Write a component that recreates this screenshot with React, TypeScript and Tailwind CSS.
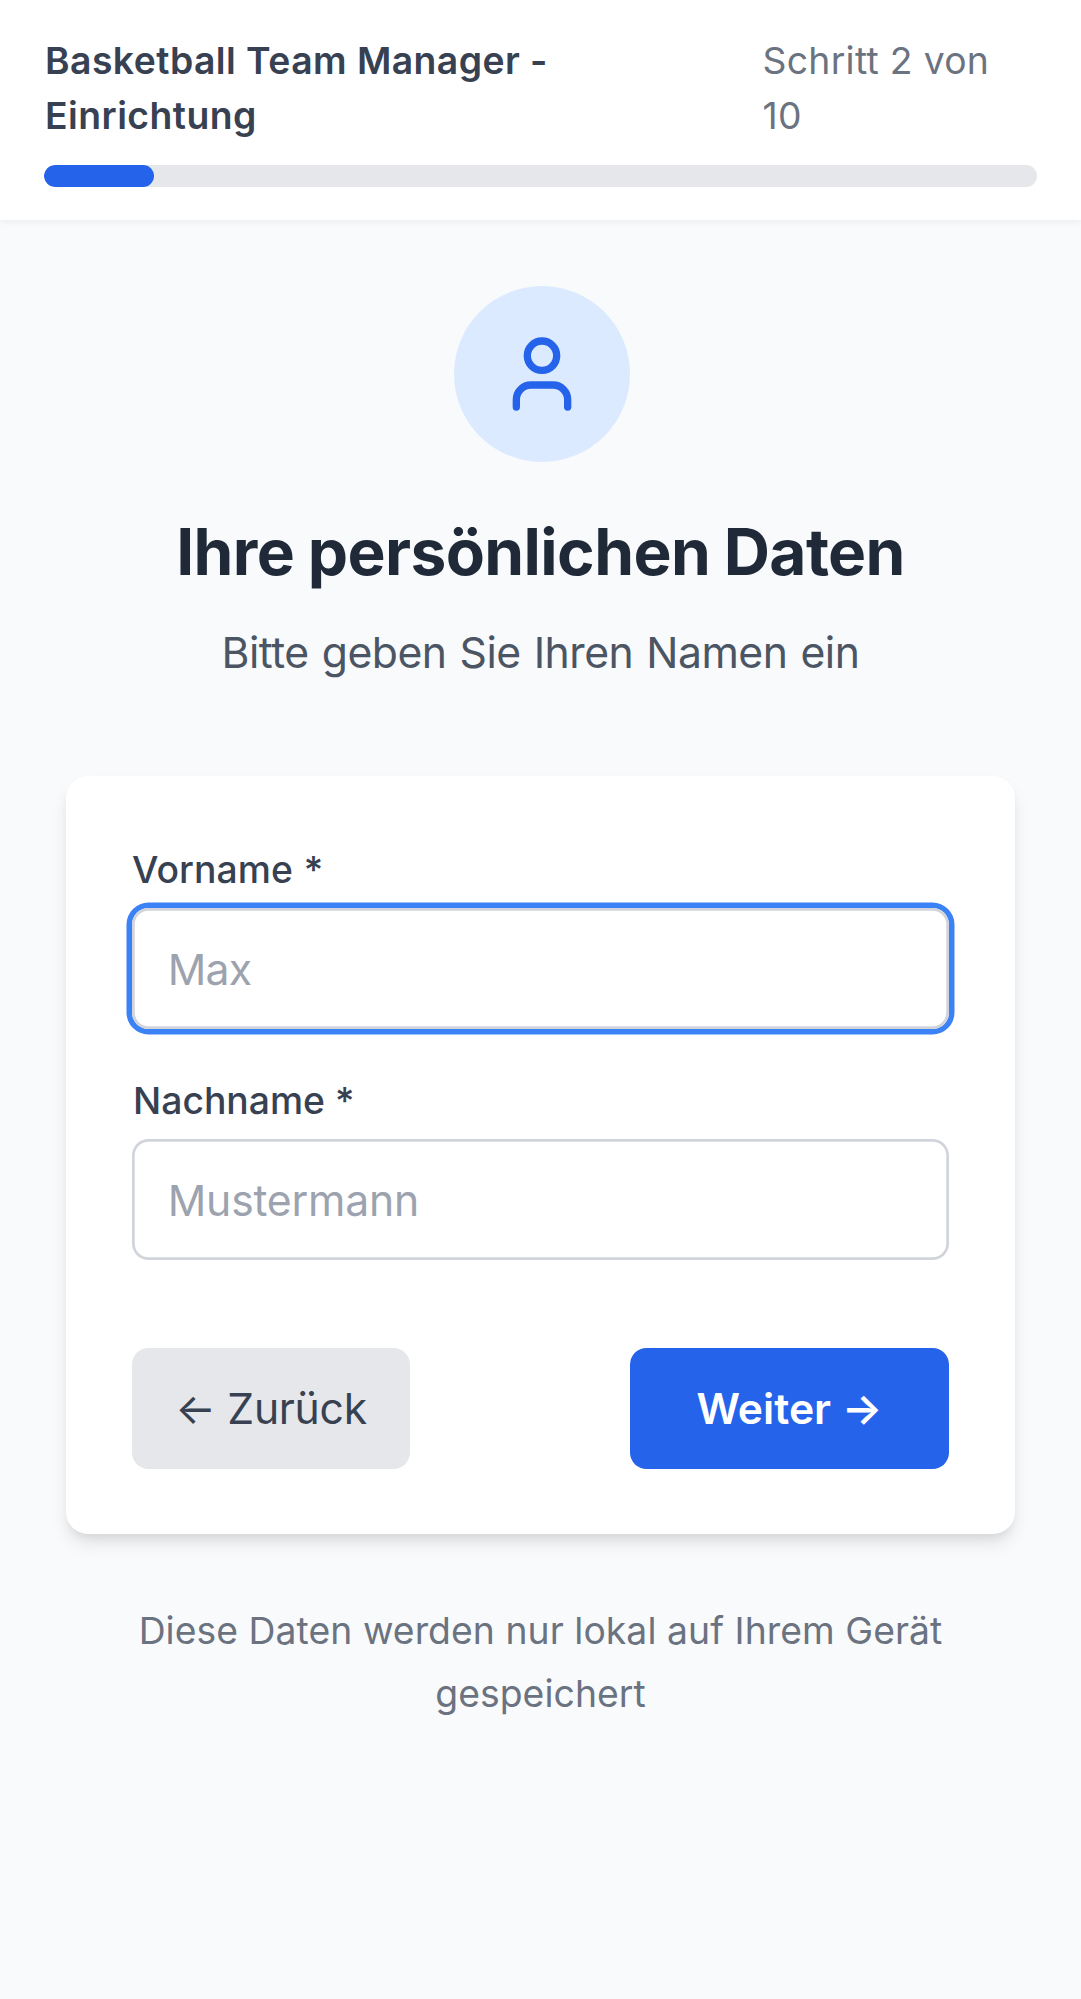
import type { ReactNode } from "react";

const TOTAL_STEPS = 10;
const progress = 1 / 9;

function UserIcon() {
  return (
    <svg viewBox="0 0 24 24" fill="none" stroke="currentColor" strokeWidth="2" strokeLinecap="round" strokeLinejoin="round" className="size-[88px] text-[#2563eb]">
      <path d="M19 21v-2a4 4 0 0 0-4-4H9a4 4 0 0 0-4 4v2" />
      <circle cx="12" cy="7" r="4" />
    </svg>
  );
}

function Header() {
  return (
    <header className="h-[220px] bg-white px-11 pt-[33px] shadow-[0_2.75px_5.5px_rgb(0_0_0/0.05)]">
      <div className="mb-[22px] flex justify-between pl-px text-[37.3px] leading-[55px]">
        <span className="w-[530px] font-semibold tracking-[0.45px] text-[#374151]">
          Basketball Team Manager - Einrichtung
        </span>
        <span className="w-[274.5px] tracking-[0.3px] text-[#6b7280]">Schritt 2 von {TOTAL_STEPS}</span>
      </div>
      <div className="h-[22px] overflow-hidden rounded-full bg-[#e5e7eb]">
        <div className="h-full rounded-full bg-[#2563eb]" style={{ width: `${progress * 100}%` }} />
      </div>
    </header>
  );
}

function Field({ label, placeholder, className, labelClass, focused = false }: { label: string; placeholder: string; className: string; labelClass: string; focused?: boolean }) {
  return (
    <label className="block">
      <span className={`mb-[11px] block text-[37.3px] leading-[55px] font-medium text-[#374151] ${labelClass}`}>{label}</span>
      <input
        placeholder={placeholder}
        className={`block h-[121px] w-full rounded-[16.5px] bg-white px-[35.75px] pt-[2px] text-[42.7px] outline-none placeholder:text-[#9ca3af] ${className} ${
          focused
            ? "shadow-[0_0_0_5.5px_#3b82f6,inset_0_0_0_2.75px_#d1d5db]"
            : "shadow-[inset_0_0_0_2.75px_#d1d5db]"
        }`}
      />
    </label>
  );
}

function Button({ className, children }: { className: string; children: ReactNode }) {
  return (
    <button type="button" className={`h-[121px] rounded-[16.5px] pt-[3px] text-[42.7px] whitespace-nowrap ${className}`}>
      {children}
    </button>
  );
}

export default function App() {
  return (
    <div className="min-h-[1999px] bg-[#f9fafc] font-[Inter,'Liberation_Sans',sans-serif]">
      <Header />
      <main className="px-[66px] pt-[66px] text-center">
        <div className="flex justify-center pl-[3px]">
          <div className="flex size-[176px] items-center justify-center rounded-full bg-[#dbeafe]">
            <UserIcon />
          </div>
        </div>
        <h1 className="mt-[46px] text-[64px] leading-[88px] font-bold tracking-[-0.6px] [word-spacing:-1px] text-[#1f2937]">
          Ihre persönlichen Daten
        </h1>
        <p className="mt-[22px] text-[42.7px] leading-[70px] tracking-[-0.5px] [word-spacing:1.5px] text-[#4b5563]">
          Bitte geben Sie Ihren Namen ein
        </p>
        <form className="mt-[87.5px] h-[758.5px] rounded-[22px] bg-white p-[66px] text-left shadow-[0_11px_16.5px_-2.75px_rgb(0_0_0/0.1),0_5.5px_11px_-5.5px_rgb(0_0_0/0.1)]">
          <div className="flex flex-col gap-11">
            <Field label="Vorname *" placeholder="Max" focused labelClass="tracking-[0.05px] [word-spacing:1px]" className="tracking-[-0.8px]" />
            <Field label="Nachname *" placeholder="Mustermann" labelClass="pl-px tracking-[0px]" className="tracking-[-0.2px]" />
          </div>
          <div className="mt-[88px] flex justify-between">
            <Button className="w-[278px] bg-[#e5e7eb] tracking-[-0.3px] text-[#374151]">← Zurück</Button>
            <Button className="w-[319px] bg-[#2563eb] font-semibold text-white">Weiter →</Button>
          </div>
        </form>
        <p className="mt-[66px] px-11 text-[37.3px] leading-[62.8px] tracking-[0.06px] text-[#6b7280]">
          Diese Daten werden nur lokal auf Ihrem Gerät gespeichert
        </p>
      </main>
    </div>
  );
}
